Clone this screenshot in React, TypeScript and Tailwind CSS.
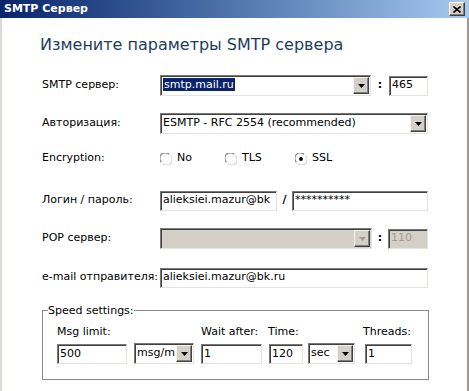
import type { ReactNode } from 'react';

const font = { fontFamily: '"DejaVu Sans", Verdana, sans-serif' };

function DropButton({ disabled = false }: { disabled?: boolean }) {
  return (
    <div className="flex h-[17px] w-[16px] shrink-0 items-center justify-center border border-t-[#f4f3ef] border-l-[#f4f3ef] border-b-[#404040] border-r-[#404040] bg-[#d4d0c8] shadow-[inset_-1px_-1px_0_#808080]">
      <svg width="7" height="4" viewBox="0 0 7 4">
        <path d="M0 0h7L3.5 4z" fill={disabled ? '#a09c94' : '#000'} />
      </svg>
    </div>
  );
}

function Field({ w, children, disabled = false, className = '' }: { w: string; children?: ReactNode; disabled?: boolean; className?: string }) {
  return (
    <div
      className={`flex h-[20px] shrink-0 items-center overflow-hidden whitespace-nowrap border border-t-[#7a7a7a] border-l-[#7a7a7a] border-b-[#e6e3dc] border-r-[#e6e3dc] pl-[2px] text-[11px] shadow-[inset_1px_1px_0_#404040] ${w} ${disabled ? 'bg-[#d4d0c8] text-[#a09c94]' : 'bg-white text-black'} ${className}`}
    >
      {children}
    </div>
  );
}

function Select({ w, children, disabled = false }: { w: string; children?: ReactNode; disabled?: boolean }) {
  return (
    <div
      className={`flex h-[21px] shrink-0 items-center justify-between overflow-hidden whitespace-nowrap border border-t-[#7a7a7a] border-l-[#7a7a7a] border-b-[#e6e3dc] border-r-[#e6e3dc] pl-[2px] pr-[1px] text-[11px] shadow-[inset_1px_1px_0_#404040] ${w} ${disabled ? 'bg-[#d4d0c8]' : 'bg-white'}`}
    >
      <div className="min-w-0 flex-1 overflow-hidden">{children}</div>
      <DropButton disabled={disabled} />
    </div>
  );
}

function Radio({ checked = false, label }: { checked?: boolean; label: string }) {
  return (
    <div className="flex items-center gap-[5px]">
      <svg width="12" height="12" viewBox="0 0 12 12">
        <circle cx="6" cy="6" r="5.4" fill="#fff" />
        <path d="M1.4 9.2A5.4 5.4 0 0 1 9.2 1.4" stroke="#8a8a8a" strokeWidth="1.3" fill="none" />
        <path d="M10.6 2.8A5.4 5.4 0 0 1 2.8 10.6" stroke="#d8d6d0" strokeWidth="1.3" fill="none" />
        {checked && <circle cx="6" cy="6" r="1.9" fill="#000" />}
      </svg>
      <span>{label}</span>
    </div>
  );
}

function Row({ label, children, className = '' }: { label: string; children: ReactNode; className?: string }) {
  return (
    <div className={`flex h-[21px] items-center pl-[40px] ${className}`}>
      <span className="w-[118px] shrink-0 whitespace-nowrap">{label}</span>
      {children}
    </div>
  );
}

export default function App() {
  return (
    <div className="flex h-[391px] w-[469px] flex-col overflow-hidden bg-white text-[11px] text-black" style={font}>
      <div className="flex h-[18px] shrink-0 items-center justify-between bg-gradient-to-r from-[#0a246a] to-[#a6caf0] pl-[4px] pr-[4px]">
        <span className="text-[11px] font-bold text-white">SMTP Сервер</span>
        <div className="flex h-[14px] w-[16px] items-center justify-center border border-t-white border-l-white border-b-[#404040] border-r-[#404040] bg-[#d4d0c8] shadow-[inset_-1px_-1px_0_#808080]">
          <svg width="8" height="7" viewBox="0 0 8 7">
            <path d="M0.5 0.5l7 6M7.5 0.5l-7 6" stroke="#000" strokeWidth="1.6" />
          </svg>
        </div>
      </div>

      <div className="flex flex-1 flex-col border-l-2 border-r-2 border-l-[#dcdad4] border-r-[#9c9a94]">
        <h1 className="mt-[17px] h-[20px] pl-[38px] text-[16px] leading-[20px] text-[#1d3d5c]">
          Измените параметры SMTP сервера
        </h1>

        <Row label="SMTP сервер:" className="mt-[20px]">
          <Select w="w-[211px]">
            <span className="bg-[#0a246a] px-[1px] text-white">smtp.mail.ru</span>
          </Select>
          <span className="w-[18px] text-center font-bold">:</span>
          <Field w="w-[39px]">465</Field>
        </Row>

        <Row label="Авторизация:" className="mt-[17px]">
          <Select w="w-[268px]">ESMTP - RFC 2554 (recommended)</Select>
        </Row>

        <Row label="Encryption:" className="mt-[14px]">
          <div className="flex items-center">
            <div className="w-[65px]">
              <Radio label="No" />
            </div>
            <div className="w-[70px]">
              <Radio label="TLS" />
            </div>
            <Radio label="SSL" checked />
          </div>
        </Row>

        <Row label="Логин / пароль:" className="mt-[21px]">
          <Field w="w-[117px]">alieksiei.mazur@bk</Field>
          <span className="w-[15px] text-center font-bold">/</span>
          <Field w="w-[136px]">**********</Field>
        </Row>

        <Row label="POP сервер:" className="mt-[17px]">
          <Select w="w-[212px]" disabled />
          <span className="w-[16px] text-center font-bold">:</span>
          <Field w="w-[40px]" disabled>110</Field>
        </Row>

        <Row label="e-mail отправителя:" className="mt-[18px]">
          <Field w="w-[268px]">alieksiei.mazur@bk.ru</Field>
        </Row>

        <fieldset className="ml-[40px] mt-[16px] w-[387px] border border-[#8a8a8a] px-[5px] pb-[15px] pt-[8px]">
          <legend className="px-0 text-[11px] leading-[13px]">Speed settings:</legend>
          <div className="flex items-end pl-[9px]">
            <div className="flex flex-col gap-[6px]">
              <span className="leading-[13px]">Msg limit:</span>
              <Field w="w-[70px]">500</Field>
            </div>
            <div className="ml-[7px]">
              <Select w="w-[60px]">msg/m</Select>
            </div>
            <div className="ml-[7px] flex flex-col gap-[6px]">
              <span className="leading-[13px]">Wait after:</span>
              <Field w="w-[61px]">1</Field>
            </div>
            <div className="ml-[7px] flex flex-col gap-[6px]">
              <span className="ml-[-1px] leading-[13px]">Time:</span>
              <Field w="w-[34px]">120</Field>
            </div>
            <div className="ml-[5px]">
              <Select w="w-[47px]">sec</Select>
            </div>
            <div className="ml-[10px] flex flex-col gap-[6px]">
              <span className="ml-[-2px] leading-[13px]">Threads:</span>
              <Field w="w-[47px]">1</Field>
            </div>
          </div>
        </fieldset>
      </div>
    </div>
  );
}
